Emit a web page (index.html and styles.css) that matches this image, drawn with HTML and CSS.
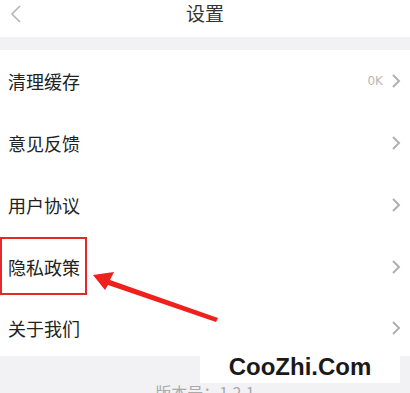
FILE: index.html
```html
<!DOCTYPE html>
<html lang="zh-CN">
<head>
  <meta charset="UTF-8" />
  <title>设置</title>
  <link rel="stylesheet" href="styles.css">
</head>
<body>

  <div class="header">
    <span class="back">
      <svg width="12" height="18" viewBox="0 0 12 18"><path d="M10 1 L2 9 L10 17" fill="none" stroke="#b4b4b4" stroke-width="1.6"/></svg>
    </span>
    <div class="title">设置</div>
  </div>

  <div class="gap"></div>

  <div class="list">
    <div class="row">
      <span class="label">清理缓存</span>
      <span class="extra">0K</span>
      <span class="arrow-right"><svg width="10" height="16" viewBox="0 0 10 16"><path d="M2 2 L8 8 L2 14" fill="none" stroke="#b0b0b0" stroke-width="2"/></svg></span>
    </div>
    <div class="row">
      <span class="label">意见反馈</span>
      <span class="arrow-right"><svg width="10" height="16" viewBox="0 0 10 16"><path d="M2 2 L8 8 L2 14" fill="none" stroke="#b0b0b0" stroke-width="2"/></svg></span>
    </div>
    <div class="row">
      <span class="label">用户协议</span>
      <span class="arrow-right"><svg width="10" height="16" viewBox="0 0 10 16"><path d="M2 2 L8 8 L2 14" fill="none" stroke="#b0b0b0" stroke-width="2"/></svg></span>
    </div>
    <div class="row">
      <span class="label">隐私政策</span>
      <span class="arrow-right"><svg width="10" height="16" viewBox="0 0 10 16"><path d="M2 2 L8 8 L2 14" fill="none" stroke="#b0b0b0" stroke-width="2"/></svg></span>
      <div class="mark-box"></div>
    </div>
    <div class="row last">
      <span class="label">关于我们</span>
      <span class="arrow-right"><svg width="10" height="16" viewBox="0 0 10 16"><path d="M2 2 L8 8 L2 14" fill="none" stroke="#b0b0b0" stroke-width="2"/></svg></span>
    </div>
  </div>

  <div class="footer">
    <div class="version">版本号：1.2.1</div>
  </div>

  <!-- annotation arrow -->
  <svg class="mark-arrow" width="410" height="393" viewBox="0 0 410 393">
    <polygon points="93,275 114,272 110,280 218,318 216,322 108,285 105,290" fill="#f0211c"/>
  </svg>

  <div class="watermark">CooZhi.Com</div>

</body>
</html>
```

FILE: styles.css
```css
body {
  margin: 0;
  font-family: "Noto Sans CJK SC", "Noto Sans", sans-serif;
  background: #f2f2f4;
  width: 410px;
  height: 393px;
  overflow: hidden;
  position: relative;
}

.header {
  height: 37px;
  background: #fff;
  display: flex;
  align-items: center;
  justify-content: center;
  position: relative;
}

.back {
  position: absolute;
  left: 10px;
  top: 4px;
}

.title {
  font-size: 19px;
  color: #333;
  margin-top: -12px;
}

.gap {
  height: 13px;
}

.list {
  background: #fff;
}

.row {
  height: 62px;
  display: flex;
  align-items: center;
  padding: 0 8px;
  position: relative;
}

.row.last {
  height: 57px;
  padding-top: 1px;
}

.label {
  font-size: 18px;
  color: #222;
  flex: 1;
}

.extra {
  font-size: 12px;
  color: #b8b8b8;
  margin-right: 8px;
  font-family: "DejaVu Sans", sans-serif;
}

.arrow-right {
  display: flex;
  margin-right: 1px;
}

.mark-box {
  position: absolute;
  left: 0;
  top: 1px;
  width: 83px;
  height: 54px;
  border: 2.5px solid #e5282a;
}

.footer {
  display: flex;
  justify-content: center;
}

.version {
  margin-top: 24px;
  font-size: 16px;
  color: #aaa;
}

.mark-arrow {
  position: absolute;
  left: 0;
  top: 0;
}

.watermark {
  position: absolute;
  left: 200px;
  top: 351px;
  width: 200px;
  height: 32px;
  background: #fff;
  display: flex;
  align-items: center;
  justify-content: center;
  font-family: "Liberation Sans", Arial, sans-serif;
  font-weight: bold;
  font-size: 24px;
  color: #1a1a1a;
}
```
